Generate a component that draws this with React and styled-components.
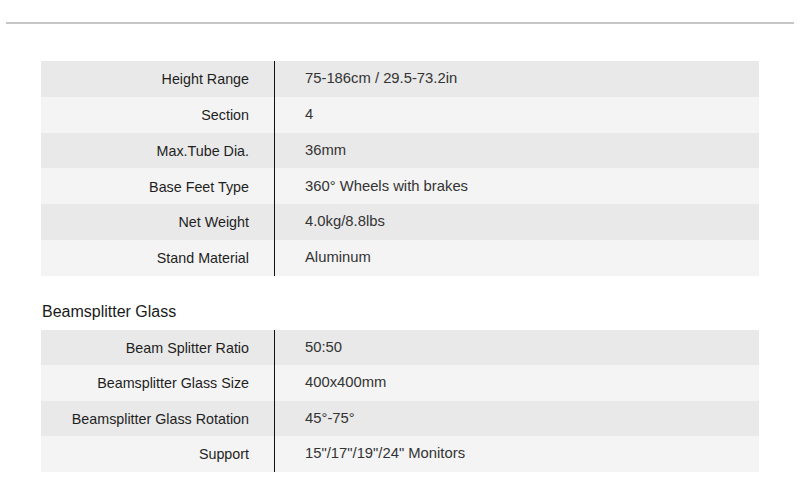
import React from "react";
import styled, { createGlobalStyle } from "styled-components";

const GlobalStyle = createGlobalStyle`
  html, body {
    margin: 0;
    padding: 0;
    background: #fff;
  }
  body {
    font-family: "Liberation Sans", Arial, Helvetica, sans-serif;
  }
`;

const Page = styled.div`
  width: 800px;
  height: 495px;
  padding-top: 22px;
  box-sizing: border-box;
`;

const Rule = styled.hr`
  margin: 0 6px;
  border: 0;
  height: 2px;
  background: #c6c6c6;
`;

const Specs = styled.section`
  margin: 37px 41px 0;
  width: 718px;
`;

const Table = styled.div`
  display: flex;
  flex-direction: column;
`;

const Row = styled.div`
  display: grid;
  grid-template-columns: 234px 1fr;
  height: ${(p) => p.h}px;
  background: ${(p) => (p.odd ? "#f4f4f4" : "#e9e9e9")};
`;

const Label = styled.div`
  display: flex;
  align-items: center;
  justify-content: flex-end;
  padding: 1px 25px 0 0;
  border-right: 1px solid #111;
  font-size: 14.3px;
  color: #1e1e1e;
`;

const Value = styled.div`
  display: flex;
  align-items: center;
  padding: 0 0 1px 30px;
  font-size: 14.8px;
  color: #333;
`;

const Heading = styled.h3`
  margin: 27px 0 9px 1px;
  font-size: 16px;
  line-height: 18px;
  font-weight: 400;
  color: #1a1a1a;
`;

const stand = [
  ["Height Range", "75-186cm / 29.5-73.2in"],
  ["Section", "4"],
  ["Max.Tube Dia.", "36mm"],
  ["Base Feet Type", "360° Wheels with brakes"],
  ["Net Weight", "4.0kg/8.8lbs"],
  ["Stand Material", "Aluminum"],
];

const glass = [
  ["Beam Splitter Ratio", "50:50"],
  ["Beamsplitter Glass Size", "400x400mm"],
  ["Beamsplitter Glass Rotation", "45°-75°"],
  ["Support", "15\"/17\"/19\"/24\" Monitors"],
];

function SpecTable({ rows, h }) {
  return (
    <Table>
      {rows.map(([k, v], i) => (
        <Row key={k} odd={i % 2 === 1} h={h}>
          <Label>{k}</Label>
          <Value>{v}</Value>
        </Row>
      ))}
    </Table>
  );
}

export default function App() {
  return (
    <>
      <GlobalStyle />
      <Page>
        <Rule />
        <Specs>
          <SpecTable rows={stand} h={35.75} />
          <Heading>Beamsplitter Glass</Heading>
          <SpecTable rows={glass} h={35.5} />
        </Specs>
      </Page>
    </>
  );
}
